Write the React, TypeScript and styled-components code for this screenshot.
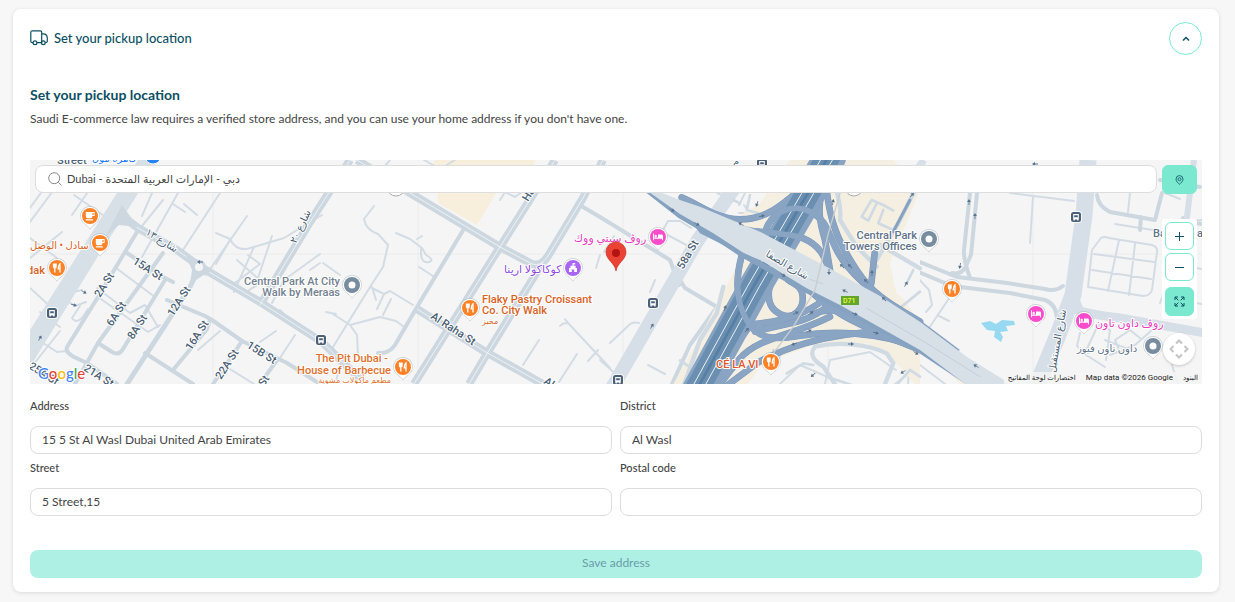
import React from 'react';
import styled, { createGlobalStyle, css } from 'styled-components';

const colors = {
  ink: '#0b4f63',
  mint: '#7ae9d0',
  mintSoft: '#aef0e3',
  line: '#dddddd',
  text: '#444444',
};

const GlobalStyle = createGlobalStyle`
  * { box-sizing: border-box; }
  body {
    margin: 0;
    background: #f7f7f7;
    color: ${colors.text};
    font-family: Lato, "DejaVu Sans", sans-serif;
    font-size: 12px;
  }
  button, input { font: inherit; color: inherit; }
`;

const Page = styled.main`
  padding: 9px 16px 10px 13px;
`;

const Card = styled.section`
  background: #fff;
  border-radius: 8px;
  padding: 13px 17px 14px;
  box-shadow: 0 1px 4px rgba(0, 0, 0, 0.12);
`;

const Header = styled.header`
  display: flex;
  align-items: center;
  justify-content: space-between;
  color: ${colors.ink};
`;

const HeaderTitle = styled.h2`
  display: flex;
  align-items: center;
  gap: 6px;
  margin: 0;
  padding-bottom: 2px;
  font-size: 13px;
  font-weight: 500;
  line-height: 20px;
`;

const CollapseButton = styled.button`
  display: grid;
  place-items: center;
  width: 33px;
  height: 33px;
  padding: 0;
  border: 1px solid ${colors.mint};
  border-radius: 50%;
  background: #fff;
  color: ${colors.ink};
`;

const Title = styled.h3`
  margin: 30px 0 4px;
  color: ${colors.ink};
  font-size: 14px;
  font-weight: 700;
  line-height: 20px;
`;

const Description = styled.p`
  margin: 0;
  line-height: 20px;
`;

const MapFrame = styled.div`
  position: relative;
  margin-top: 31px;
  height: 224px;
  overflow: hidden;
  border-radius: 2px;
  background: #f5f5f5;
`;

const MapDrawing = styled.svg`
  display: block;
  width: 100%;
  height: 100%;
`;

const MapTools = styled.div`
  position: absolute;
  inset: 5px 5px auto;
  display: flex;
  align-items: flex-start;
  gap: 5px;
`;

const SearchBox = styled.label`
  flex: 1;
  display: flex;
  align-items: center;
  gap: 5px;
  height: 28px;
  padding: 0 12px;
  border: 1px solid ${colors.line};
  border-radius: 8px;
  background: #fff;
`;

const SearchInput = styled.input`
  flex: 1;
  min-width: 0;
  padding: 0;
  border: 0;
  outline: 0;
  background: none;
  font-size: 11px;
`;

const ToolColumn = styled.div`
  display: flex;
  flex-direction: column;
  gap: 25px;
  width: 35px;
`;

const ZoomPanel = styled.div`
  display: flex;
  flex-direction: column;
  gap: 3px;
  padding: 3px;
  border-radius: 3px;
  background: #fff;
`;

const ToolButton = styled.button<{ $filled?: boolean; $spaced?: boolean }>`
  display: grid;
  place-items: center;
  width: 100%;
  height: ${(p) => (p.$filled ? 29 : 28)}px;
  padding: 0;
  border: 1px solid ${colors.mint};
  border-radius: 6px;
  background: ${(p) => (p.$filled ? colors.mint : '#fff')};
  color: ${colors.ink};
  ${(p) => p.$spaced && css`margin-top: 3px;`}
`;

const PanButton = styled.button`
  position: absolute;
  right: 7px;
  bottom: 19px;
  display: grid;
  place-items: center;
  width: 32px;
  height: 32px;
  padding: 0;
  border: 0;
  border-radius: 50%;
  background: #fff;
  color: #c4c4c4;
  box-shadow: 0 1px 3px rgba(0, 0, 0, 0.2);
`;

const Logo = styled.div`
  position: absolute;
  left: 8px;
  bottom: 2px;
  font-family: Lato, sans-serif;
  font-size: 15px;
  font-weight: 500;
  line-height: 18px;
  text-shadow: 0 0 1px #fff, 1px 0 1px #fff, -1px 0 1px #fff, 0 1px 1px #fff, 0 -1px 1px #fff;
`;

const Letter = styled.span<{ $color: string }>`
  color: ${(p) => p.$color};
`;

const MapCredits = styled.div`
  position: absolute;
  right: 0;
  bottom: 0;
  display: flex;
  gap: 10px;
  padding: 0 4px;
  background: rgba(245, 245, 245, 0.85);
  color: #222;
  font-family: Roboto, "DejaVu Sans", sans-serif;
  font-size: 8px;
  line-height: 12px;

  a { color: inherit; text-decoration: none; font-size: 7px; }
`;

const Fields = styled.form`
  display: grid;
  grid-template-columns: 1fr 1fr;
  gap: 6px 8px;
  margin-top: 14px;
`;

const Field = styled.label`
  display: flex;
  flex-direction: column;
  gap: 12px;
  font-size: 11px;
  font-weight: 500;
  line-height: 16px;
`;

const TextInput = styled.input`
  width: 100%;
  height: 28px;
  padding: 0 11px 2px;
  border: 1px solid ${colors.line};
  border-radius: 8px;
  background: #fff;
  font-size: 12px;
  font-weight: 400;
`;

const SaveButton = styled.button`
  grid-column: 1 / -1;
  height: 28px;
  margin-top: 28px;
  padding: 0 0 3px;
  border: 0;
  border-radius: 8px;
  background: ${colors.mintSoft};
  color: #6b9cab;
`;

/* ---------- map ---------- */

const Label = styled.text<{ $fill?: string; $size?: number; $halo?: string }>`
  font-family: Roboto, "DejaVu Sans", sans-serif;
  font-size: ${(p) => p.$size ?? 11}px;
  font-weight: 500;
  fill: ${(p) => p.$fill ?? '#4b5f74'};
  stroke: ${(p) => p.$halo ?? '#fff'};
  stroke-width: 2px;
  stroke-linejoin: round;
  paint-order: stroke;
`;

type PinKind = 'food' | 'cup' | 'bed' | 'dot' | 'venue';
const pinColor: Record<PinKind, string> = {
  food: '#ff8126', cup: '#ff8126', bed: '#f84ccb', dot: '#778c9f', venue: '#a966f5',
};

function Pin({ x, y, kind }: { x: number; y: number; kind: PinKind }) {
  return (
    <g transform={`translate(${x} ${y})`}>
      <path d="M0 13.500C-2 10.500-5 8.800-7 6.600A9.800 9.800 0 1 1 7 6.600C5 8.800 2 10.500 0 13.500Z" fill="#8b98a5" opacity=".45" />
      <path d="M0 12.500C-2 9.800-5 8-6.700 6.200A9.200 9.200 0 1 1 6.700 6.200C5 8 2 9.800 0 12.500Z" fill="#fff" />
      <circle r="8" fill={pinColor[kind]} />
      {kind === 'dot' && <circle r="3.500" fill="#fff" />}
      {kind === 'food' && <path d="M-3.500-4.500V-1.500Q-3.500 0-2.200 0V4.500M-2.200-4.500V0M-.9-4.500V-1.500Q-.9 0-2.200 0M3 4.500V-4.300Q1.200-3 1.200.8H3" fill="none" stroke="#fff" strokeWidth="1.300" />}
      {kind === 'cup' && <path d="M-4.200-4H4.600V0H2.400V.3Q2.400 2.200.6 2.200H-2.400Q-4.200 2.200-4.200.3ZM2.400-2.900V-1H3.600V-2.900ZM-4.200 3.300H3V4.400H-4.200Z" fill="#fff" fillRule="evenodd" />}
      {kind === 'bed' && <path d="M-5-3.500H-4V.6H0V-2.400H3.500Q5-2.400 5-1V3.300H4V1.800H-4V3.300H-5ZM-3.500-1A1.200 1.200 0 1 1-1.100-1A1.200 1.200 0 1 1-3.500-1" fill="#fff" />}
      {kind === 'venue' && <path d="M-.5-5H2.200V-3.600H.6V-2.200H2.600V0H4V4H1.200V1.500H-1.200V4H-4V0H-2.600V-2.200H-.5Z" fill="#fff" />}
    </g>
  );
}

function Stop({ x, y }: { x: number; y: number }) {
  return (
    <g transform={`translate(${x} ${y})`}>
      <rect x="-6" y="-6" width="12" height="12" rx="3.500" fill="#fff" opacity=".8" />
      <rect x="-5" y="-5" width="10" height="10" rx="2.500" fill="#4a6076" />
      <path d="M-2.800-3H2.800V2.500H-2.800ZM-1.800-1.800V.3H1.800V-1.800ZM-2.500 2.500H-1.200V3.600H-2.500ZM1.200 2.500H2.500V3.600H1.200Z" fill="#fff" fillRule="evenodd" />
    </g>
  );
}

function Arrow({ x, y, a }: { x: number; y: number; a: number }) {
  return <path transform={`translate(${x} ${y}) rotate(${a})`} d="M-3-.4H0V-1.900L3 0L0 1.900V.4H-3Z" fill="#57708b" />;
}

const thinRoads = [
  'M30 222L64 176L76 160M30 208L56 172M76 160L92 178M74 195L103 215M92 186L72 215M30 238L57 258M30 258L62 232',
  'M152 193L142 216M178 193L142 257M220 193L183 250M142 226L163 200M173 204L185 212M197 215L184 204',
  'M216 233L230 239Q235 250 247 249L284 238L322 215M230 240L216 264M254 247L234 292M248 255L260 264L231 286',
  'M206 275L247 216M272 236L256 284M320 254L284 280L272 303M284 280L300 285M237 260L262 282L246 292',
  'M82 290L73 292L66 300L75 306L86 302M80 306L72 318Q76 324 82 318L88 309M40 312L60 327M30 288L53 309M30 350L50 330M33 365L60 331M40 341L57 352L67 351',
  'M97 288L130 313L145 305M98 297L148 332L160 325M116 268L155 297M145 305L158 327',
  'M280 310L298 329M295 335L278 361M335 384L340 367M260 342L276 331M198 350L220 331M225 366L254 384',
  'M374 206L364 219Q366 230 378 234L388 245L383 267L370 287L333 347M396 233L410 239L422 248L426 255Q435 260 429 262Q420 264 421 249M417 239L422 236M419 267L433 276',
  'M370 287L384 294L390 291L413 305M384 294L377 309M391 299L383 315M372 287L376 300M333 314L350 325L380 317L396 321L404 327M350 325L357 335L358 355M326 312L336 314M320 263L310 270M340 275L323 263M333 289L324 294',
  'M390 160L378 174M424 160L440 169L455 160M500 200L505 192L515 197L526 189',
  'M565 319L569 324L610 368M560 326Q562 323 568 323M588 361L598 350M539 340L523 365M577 354L559 382M600 255L596 268M604 252L614 236',
  'M662 232L668 221L680 221L691 228M662 232L690 247M655 280L650 292M610 343L628 326Q632 321 639 323M600 360L620 378M648 365L665 374M680 360L720 384',
  'M717 193L726 197L735 193M739 205L745 193M739 213L757 213M744 205L751 215M745 176L759 166',
  'M1033 197L1030 243M1010 193L1074 201M996 178L1040 186M917 265L902 287L900 298L909 312L920 320',
  'M915 275L929 290L932 305L926 312M929 328L950 297M939 316L949 321',
  'M1101 238Q1104 236 1109 238L1152 245Q1158 247 1157 252L1152 290Q1150 296 1143 296L1088 287L1092 250ZM1119 240L1108 291M1135 244L1129 295M1094 254L1154 262M1092 270L1151 279',
  'M1115 224L1165 232M1130 193L1128 212M1165 193L1180 199M1202 220L1188 221M1202 304L1190 302M1190 267L1202 269M1160 303L1165 290',
  'M1080 333L1077 346L1085 353L1098 325M1098 325L1110 330L1106 360M1083 353L1105 367M1110 355L1135 345L1152 330M1120 352L1115 340L1130 330L1140 338M1172 365L1178 384M1105 340L1130 350',
  'M1030 384L1056 338L1057 315M895 384L920 365L945 384M875 340L910 360L908 384M825 384L830 360L870 352L896 370M780 384L800 365L830 378',
];

const minorRoads = [
  'M137 232L98 297L67 347Q65 352 74 357L87 363L117 384', 'M163 253L98 343L75 384', 'M98 343L112 352Q119 356 123 349L165 280',
  'M127 253L165 278L173 282', 'M167 300L205 316L212 320L242 341L287 363L320 384', 'M210 320L207 329L173 370',
  'M242 341L213 384', 'M277 360L260 384', 'M145 353L193 384',
  'M465 227L417 307L395 345Q389 354 378 353', 'M583 207L600 217L670 260L679 285', 'M680 280L685 288L717 307L690 345L672 384',
  'M890 250L957 277L1007 283L1045 289Q1055 292 1063 286', 'M890 260L952 286L960 287L1010 293L1045 300Q1056 304 1057 318',
  'M970 193L964 250Q963 258 970 278', 'M977 193L971 255L965 268Q960 275 952 273',
  'M1097 195Q1098 206 1110 212L1155 220L1162 193M1141 217L1140 230', 'M1202 224L1188 222L1183 218M1160 180L1200 187',
];

const twinRoads = [
  'M122 216L138 228L177 250L199 266L260 302L322 342L365 384',
  'M350 160L310 222L260 305', 'M357 160L410 193L460 223L500 247L532 264Q541 267 548 256L583 198L603 160',
  'M555 160L500 247L414 384', 'M543 262L488 352L469 384', 'M417 309L484 351L550 388',
];

/* Interchange coordinates use a grid three times finer than the map. */
const connectors = [
  'M5 22C60 45 110 88 180 88S290 60 370 -10',
  'M60 52C130 95 180 120 230 125S330 128 370 145S440 190 455 275',
  'M250 150C262 60 340 40 390 65S440 120 470 180S560 300 720 400',
  'M440 0C450 90 470 150 530 240S650 350 720 395',
  'M425 0C412 60 420 100 435 150L455 270',
  'M290 250C258 290 255 350 300 372S372 350 368 318S345 285 325 270',
  'M190 180C165 260 165 330 200 390S280 450 360 437S600 420 730 480',
  'M430 330C380 370 310 395 220 402',
  'M445 345C390 400 310 400 225 425',
  'M235 205L160 330L35 575',
  'M215 400L150 490L95 600',
  'M600 425C430 430 300 480 230 520L130 595',
  'M450 380C330 440 240 440 180 505L110 595',
  'M380 290C440 360 520 400 720 480',
  'M400 372C440 355 490 360 540 380',
  'M584 190L574 280',
];

const frontage = [
  'M705 0L655 100L590 210', 'M470 5Q485 60 480 90L530 170L590 230', 'M130 290L110 370L60 450L10 590',
  'M405 470Q380 500 430 530L470 590M405 470C470 455 560 460 620 490L640 520L610 595',
  'M720 235L600 165',
];

const alleys = [
  'M545 80L575 30L610 45L640 62M545 80L565 92L590 40M610 60L595 100L640 120L660 85',
  'M720 305L665 350L655 385M680 280L700 240', 'M0 512L120 590M280 480L300 495L290 520M320 550L370 520L400 525M440 560L530 590',
  'M160 30L180 40M210 15L200 60L235 70M650 585L690 540L720 560',
];

function Interchange() {
  return (
    <g transform="translate(680 190) scale(.3333)" fill="none" strokeLinejoin="round" strokeLinecap="round">
      <path d="M330 -90H640L720 0L650 170L640 280L720 400V600L650 520L560 460L400 465L250 520L190 600H-30L60 440L190 190L150 95L240 40Z" fill="#f5efe2" />
      <path d="M720 170L650 160L630 220L650 310L720 370Z" fill="#f5f5f5" />
      <g stroke="#d0dae2" strokeWidth="8">{alleys.map((d) => <path key={d} d={d} />)}</g>
      <g stroke="#d0dae2" strokeWidth="13">{frontage.map((d) => <path key={d} d={d} />)}</g>
      <path d="M690 30L640 125" stroke="#86a2c1" strokeWidth="9" />
      {connectors.map((d) => <path key={d} d={d} stroke="#7a97b8" strokeWidth="20" />)}
      {connectors.map((d) => <path key={d} d={d} stroke="#8aa5c4" strokeWidth="17" />)}
      <path d="M450 -100L388 10L225 290L55 600" stroke="#89a4c2" strokeWidth="98" />
      <path d="M445 -100L383 10L220 290L50 600" stroke="#6a8fb1" strokeWidth="72" />
      <path d="M445 -100L383 10L220 290L50 600" stroke="#587fa3" strokeWidth="8" />
      <path d="M463 -100L401 10L238 290L68 600M427 -100L365 10L202 290L32 600" stroke="#eaf1f7" strokeWidth="3" />
      <path d="M250 150C262 60 340 40 390 65S440 120 470 180" stroke="#8aa5c4" strokeWidth="17" />
      <path d="M180 118C210 125 330 128 370 145S440 190 455 275" stroke="#8aa5c4" strokeWidth="17" />
      <path d="M190 180C165 260 165 330 200 390S280 450 360 437" stroke="#8aa5c4" strokeWidth="17" />
      <path d="M-110 -10L0 76L100 135L190 195L380 300L480 350L720 480L900 600" stroke="#86a2c1" strokeWidth="18" />
      <path d="M30 90L110 105L195 180L190 220L170 185L60 130Z" fill="#86a2c1" />
      <path d="M560 300L720 390L840 480L800 500Z" fill="#86a2c1" />
      <path d="M-130 -20L0 30L60 50L240 125L430 225L600 318L720 395L860 500L1020 600H880L720 480L480 345L380 295L250 215L190 188L100 130L0 72Z" fill="#d7dfe7" />
      <path d="M560 355L740 460L900 560M390 268L430 282" stroke="#c4cfd9" strokeWidth="3" />
      <path d="M480 10L445 130L405 300L340 410L250 530" stroke="#c9cdd1" strokeWidth="4" />
    </g>
  );
}

function CityMap() {
  return (
    <MapDrawing viewBox="30 160 1172 224" preserveAspectRatio="xMidYMid slice" role="img" aria-label="Map of Al Wasl, Dubai">
      <rect x="0" y="160" width="1300" height="224" fill="#f5f5f5" />
      <path d="M435 160H536L516 193H455L432 165ZM438 193H496L477 225L438 203Z" fill="#f7eedc" />
      <path d="M880 300L960 384H1000L940 350L900 310Z" fill="#f5efe2" />
      <path d="M213 193V384M418 193V384M623 193V384M828 193V384M1033 193V384M30 254H1202" stroke="#ececee" fill="none" />

      <g fill="none" stroke="#d3dce4" strokeWidth="2" strokeLinejoin="round" strokeLinecap="round">
        {thinRoads.map((d) => <path key={d} d={d} />)}
      </g>
      <g fill="none" stroke="#ccd7e0" strokeWidth="4" strokeLinejoin="round" strokeLinecap="round">
        {minorRoads.map((d) => <path key={d} d={d} />)}
        <path d="M199 268L190 287L127 384" strokeWidth="5" />
      </g>
      <g fill="none" strokeLinejoin="round">
        {twinRoads.map((d) => <path key={d} d={d} stroke="#ccd7e0" strokeWidth="8" />)}
        {twinRoads.map((d) => <path key={d} d={d} stroke="#eef2f5" strokeWidth="1" />)}
      </g>
      <path d="M186 256L199 260L210 272L202 276L190 284L192 270Z" fill="#ccd7e0" />
      <circle cx="199" cy="267" r="7" fill="#ccd7e0" />
      <circle cx="199" cy="267" r="4" fill="#f5f5f5" />

      <path d="M138 160H158L134 200L100 253L30 367V330L117 193Z" fill="#d8e0e7" />
      <path d="M122 205L138 227L119 225L105 237Z" fill="#ccd7e0" />
      <g fill="none" stroke="#d6dfe7">
        <path d="M735 187L698 240L660 305L612 388" strokeWidth="14" />
        <path d="M1088 160L1084 215L1073 295L1058 335L1036 388" strokeWidth="17" />
        <path d="M1070 307Q1085 314 1120 318L1205 333" strokeWidth="9" />
        <path d="M1194 160L1186 225" strokeWidth="6" />
        <path d="M924 160L893 200" strokeWidth="7" />
      </g>
      <path d="M1070 312L1079 298L1085 312Z" fill="#d6dfe7" />

      <Interchange />

      <path d="M981 323L990 321L996 324L1002 320L1014 321L1015 325L1006 326L1008 331L1000 332L1003 337L1001 342L994 337L995 331L987 330Z" fill="#96d9f1" />

      <Arrow x={672} y={210} a={30} /><Arrow x={697} y={224} a={30} /><Arrow x={741} y={224} a={210} />
      <Arrow x={762} y={216} a={-10} /><Arrow x={757} y={204} a={110} /><Arrow x={833} y={202} a={-80} />
      <Arrow x={829} y={272} a={90} /><Arrow x={842} y={266} a={225} /><Arrow x={850} y={266} a={225} />
      <Arrow x={866} y={281} a={225} /><Arrow x={872} y={273} a={-90} /><Arrow x={845} y={291} a={205} />
      <Arrow x={884} y={299} a={225} /><Arrow x={855} y={314} a={20} /><Arrow x={876} y={333} a={15} />
      <Arrow x={851} y={344} a={0} /><Arrow x={811} y={313} a={-35} /><Arrow x={796} y={313} a={-25} />
      <Arrow x={809} y={331} a={-25} /><Arrow x={783} y={275} a={30} /><Arrow x={916} y={353} a={30} />
      <Arrow x={725} y={308} a={-70} /><Arrow x={747} y={330} a={-50} /><Arrow x={652} y={326} a={-60} />
      <Arrow x={969} y={202} a={-90} /><Arrow x={975} y={216} a={-90} /><Arrow x={960} y={266} a={100} />
      <Arrow x={906} y={284} a={-60} /><Arrow x={912} y={195} a={-50} />
      <Arrow x={976} y={366} a={210} /><Arrow x={813} y={375} a={140} /><Arrow x={903} y={372} a={150} />
      <Arrow x={1035} y={164} a={180} /><Arrow x={84} y={292} a={30} /><Arrow x={74} y={305} a={15} />
      <Arrow x={40} y={338} a={-60} /><Arrow x={200} y={262} a={180} /><Arrow x={794} y={344} a={160} />

      <rect x="841" y="296" width="18" height="9" fill="#64a52c" />
      <Label x="843" y="303" $size={7} $fill="#eaff3b" $halo="#64a52c">D71</Label>

      <Label transform="translate(100 298) rotate(-57)">2A St</Label>
      <Label transform="translate(112 327) rotate(-57)">6A St</Label>
      <Label transform="translate(133 340) rotate(-57)">8A St</Label>
      <Label transform="translate(173 317) rotate(-57)">12A St</Label>
      <Label transform="translate(191 351) rotate(-57)">16A St</Label>
      <Label transform="translate(221 380) rotate(-57)">22A St</Label>
      <Label transform="translate(132 263) rotate(32)">15A St</Label>
      <Label transform="translate(246 347) rotate(32)">15B St</Label>
      <Label transform="translate(83 370) rotate(32)">21A St</Label>
      <Label transform="translate(28 368) rotate(32)">25A St</Label>
      <Label transform="translate(264 387) rotate(-57)">St</Label>
      <Label transform="translate(430 318) rotate(33)">Al Raha St</Label>
      <Label transform="translate(543 383) rotate(33)">Al Raha</Label>
      <Label transform="translate(683 270) rotate(-60)">58a St</Label>
      <Label transform="translate(528 202) rotate(-58)">Hawi St</Label>
      <Label transform="translate(145 234) rotate(32)" $size={10}>شارع ١٣</Label>
      <Label transform="translate(296 244) rotate(-65)" $size={10}>شارع ٢٠</Label>
      <Label transform="translate(765 256) rotate(30)" $size={10}>شارع الصفا</Label>
      <Label transform="translate(1055 373) rotate(-80)" $size={10}>شارع المستقبل</Label>
      <Label x="57" y="164">Street</Label>
      <Label x="92" y="162" $fill="#1f7cf0" $size={10}>قاهرة مول</Label>

      <Label x="30" y="249" $fill="#d9621e" $size={10}>سادل • الوصل</Label>
      <Label x="27" y="274" $fill="#d9621e">dak</Label>
      <Label x="340" y="285" textAnchor="end" $fill="#73818f">Central Park At City</Label>
      <Label x="340" y="296" textAnchor="end" $fill="#73818f">Walk by Meraas</Label>
      <Label x="388" y="362" textAnchor="end" $fill="#e0702a">The Pit Dubai -</Label>
      <Label x="391" y="374" textAnchor="end" $fill="#e0702a">House of Barbecue</Label>
      <Label x="391" y="383" textAnchor="end" $fill="#e0702a" $size={8}>مطعم مأكولات مشوية</Label>
      <Label x="482" y="303" $fill="#d9621e">Flaky Pastry Croissant</Label>
      <Label x="482" y="314" $fill="#d9621e">Co. City Walk</Label>
      <Label x="482" y="324" $fill="#d9621e" $size={8}>مخبز</Label>
      <Label x="504" y="273" $fill="#8f4be0">كوكاكولا ارينا</Label>
      <Label x="574" y="242" $fill="#e83dbd">روڤ سيتي ووك</Label>
      <Label x="716" y="368" $fill="#e0552a">CÉ LA VI</Label>
      <Label x="917" y="239" textAnchor="end" $fill="#5f7389">Central Park</Label>
      <Label x="917" y="250" textAnchor="end" $fill="#5f7389">Towers Offices</Label>
      <Label x="1095" y="327" $fill="#e83dbd">روڤ داون تاون</Label>
      <Label x="1077" y="352" $fill="#5f7389" $size={10}>داون تاون فيوز</Label>
      <Label x="1153" y="237" $fill="#5f7389">Ba</Label>
      <Label x="1203" y="237" textAnchor="end" $fill="#5f7389">na</Label>

      <Stop x={52} y={313} /><Stop x={321} y={340} /><Stop x={653} y={303} /><Stop x={618} y={380} />
      <Stop x={1076} y={217} /><Stop x={762} y={164} />
      <Label x="733" y="165" $size={10}>م</Label>
      <circle cx="153" cy="156" r="8" fill="#2684f5" stroke="#fff" strokeWidth="1" />
      <circle cx="396" cy="187" r="9" fill="#fff" stroke="#aaa" />
      <circle cx="854" cy="187" r="9" fill="#fff" stroke="#aaa" />

      <Pin x={90} y={216} kind="cup" /><Pin x={100} y={243} kind="cup" /><Pin x={57} y={268} kind="food" />
      <Pin x={352} y={285} kind="dot" /><Pin x={403} y={367} kind="food" /><Pin x={470} y={308} kind="food" />
      <Pin x={573} y={268} kind="venue" /><Pin x={658} y={237} kind="bed" /><Pin x={771} y={362} kind="food" />
      <Pin x={929} y={239} kind="dot" /><Pin x={952} y={289} kind="food" /><Pin x={1036} y={314} kind="bed" />
      <Pin x={1084} y={321} kind="bed" /><Pin x={1153} y={346} kind="dot" />

      <path d="M616 271C615 263 606 260 606 252A10 10 0 0 1 626 252C626 260 617 263 616 271Z" fill="#ea4335" stroke="#c5331f" strokeWidth=".7" />
      <circle cx="616" cy="253" r="4" fill="#b31412" />
    </MapDrawing>
  );
}

/* ---------- icons ---------- */

const TruckIcon = () => (
  <svg width="18" height="16" viewBox="0 0 18 16" fill="none" stroke="currentColor" strokeWidth="1.200" strokeLinejoin="round" aria-hidden="true">
    <path d="M3 12.700H2.300Q.8 12.700.8 11.200V2.300Q.8.8 2.300.8H10.200Q11.700.8 11.700 2.300V12.700H7M11.700 3.800H13.200Q17.300 3.800 17.300 8.200V11.500Q17.300 12.700 15.200 12.700" />
    <circle cx="5" cy="12.800" r="1.900" /><circle cx="13.300" cy="12.800" r="1.900" />
  </svg>
);

const SearchIcon = () => (
  <svg width="14" height="14" viewBox="0 0 14 14" fill="none" stroke="#888" aria-hidden="true">
    <circle cx="6.200" cy="6.200" r="5.500" /><path d="M10.300 10.300L13.500 13.500" />
  </svg>
);

const PlaceIcon = () => (
  <svg width="9" height="10" viewBox="0 0 9 10" fill="none" stroke="currentColor" strokeWidth=".8" aria-hidden="true">
    <path d="M4.500 9.300C3.500 8.200 1 6.600 1 4.100A3.500 3.500 0 0 1 8 4.100C8 6.600 5.500 8.200 4.500 9.300Z" /><circle cx="4.500" cy="4.200" r="1.500" />
  </svg>
);

const StrokeIcon = ({ d, size, weight = 1 }: { d: string; size: number; weight?: number }) => (
  <svg width={size} height={size} viewBox={`0 0 ${size} ${size}`} fill="none" stroke="currentColor" strokeWidth={weight} aria-hidden="true">
    <path d={d} />
  </svg>
);

const logoLetters: [string, string][] = [
  ['G', '#4285f4'], ['o', '#ea4335'], ['o', '#fbbc05'], ['g', '#4285f4'], ['l', '#34a853'], ['e', '#ea4335'],
];

const fields = [
  { name: 'address', label: 'Address', value: '15 5 St Al Wasl Dubai United Arab Emirates' },
  { name: 'district', label: 'District', value: 'Al Wasl' },
  { name: 'street', label: 'Street', value: '5 Street,15' },
  { name: 'postal', label: 'Postal code', value: '' },
];

export default function App() {
  return (
    <>
      <GlobalStyle />
      <Page>
        <Card>
          <Header>
            <HeaderTitle>
              <TruckIcon />
              Set your pickup location
            </HeaderTitle>
            <CollapseButton type="button" aria-label="Collapse">
              <StrokeIcon size={8} weight={1.5} d="M1 5.500L4 2.500L7 5.500" />
            </CollapseButton>
          </Header>
          <Title>Set your pickup location</Title>
          <Description>
            Saudi E-commerce law requires a verified store address, and you can use your home address if you don't have one.
          </Description>
          <MapFrame>
            <CityMap />
            <Logo>{logoLetters.map(([ch, c], i) => <Letter key={i} $color={c}>{ch}</Letter>)}</Logo>
            <MapCredits>
              <a href="#shortcuts">اختصارات لوحة المفاتيح</a>
              <span>Map data ©2026 Google</span>
              <a href="#terms">البنود</a>
            </MapCredits>
            <MapTools>
              <SearchBox>
                <SearchIcon />
                <SearchInput aria-label="Search location" defaultValue="Dubai - دبي - الإمارات العربية المتحدة" />
              </SearchBox>
              <ToolColumn>
                <ToolButton $filled type="button" aria-label="My location"><PlaceIcon /></ToolButton>
                <ZoomPanel>
                  <ToolButton type="button" aria-label="Zoom in"><StrokeIcon size={9} d="M0 4.500H9M4.500 0V9" /></ToolButton>
                  <ToolButton type="button" aria-label="Zoom out"><StrokeIcon size={9} d="M0 4.500H9" /></ToolButton>
                  <ToolButton $filled $spaced type="button" aria-label="Full screen">
                    <StrokeIcon size={11} d="M1 4V1H4M1 1L4.300 4.300M7 1H10V4M10 1L6.700 4.300M10 7V10H7M10 10L6.700 6.700M4 10H1V7M1 10L4.300 6.700" />
                  </ToolButton>
                </ZoomPanel>
              </ToolColumn>
            </MapTools>
            <PanButton type="button" aria-label="Pan map">
              <StrokeIcon size={20} weight={2} d="M7 4.500L10 1.500L13 4.500M7 15.500L10 18.500L13 15.500M4.500 7L1.500 10L4.500 13M15.500 7L18.500 10L15.500 13" />
            </PanButton>
          </MapFrame>
          <Fields>
            {fields.map((f) => (
              <Field key={f.name}>
                {f.label}
                <TextInput name={f.name} defaultValue={f.value} />
              </Field>
            ))}
            <SaveButton type="button" disabled>Save address</SaveButton>
          </Fields>
        </Card>
      </Page>
    </>
  );
}
